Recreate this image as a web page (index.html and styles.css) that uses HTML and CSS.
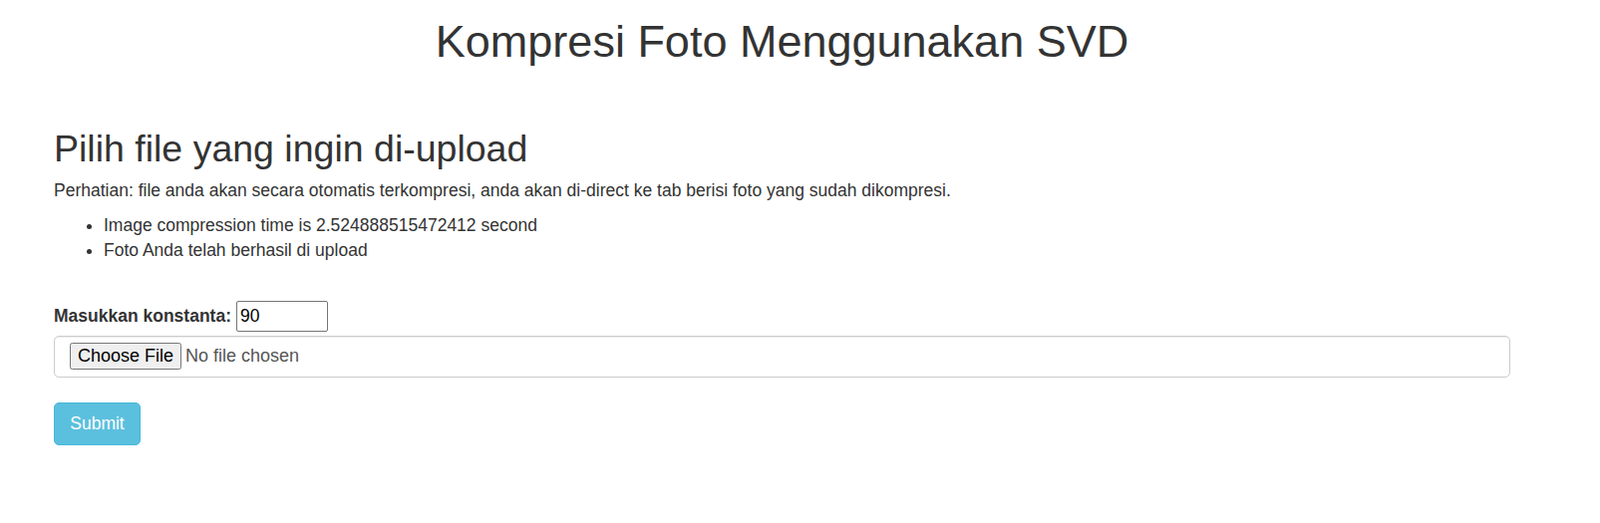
FILE: index.html
```html
<!DOCTYPE html>
<html lang="id">
<head>
<meta charset="utf-8">
<title>Kompresi Foto Menggunakan SVD</title>
<link rel="stylesheet" href="styles.css">
</head>
<body>
<div class="container">
  <h1 class="page-title">Kompresi Foto Menggunakan SVD</h1>
  <h2 class="section-title">Pilih file yang ingin di-upload</h2>
  <p class="note">Perhatian: file anda akan secara otomatis terkompresi, anda akan di-direct ke tab berisi foto yang sudah dikompresi.</p>
  <ul class="messages">
    <li>Image compression time is 2.524888515472412 second</li>
    <li>Foto Anda telah berhasil di upload</li>
  </ul>
  <form class="upload-form">
    <div class="const-row">
      <label class="const-label" for="k">Masukkan konstanta:</label>
      <input class="const-input" id="k" type="text" value="90">
    </div>
    <div class="file-box">
      <input class="file-input" type="file">
    </div>
    <button class="btn-submit" type="button">Submit</button>
  </form>
</div>
</body>
</html>
```

FILE: styles.css
```css
html, body {
  margin: 0;
  padding: 0;
  background: #fff;
}
body {
  font-family: "Liberation Sans", Arial, Helvetica, sans-serif;
  font-size: 17.5px;
  line-height: 25px;
  color: #333;
}
.container {
  margin-left: 54px;
  width: 1461px;
}
.page-title {
  margin: 17px 0 0;
  font-size: 45px;
  font-weight: 500;
  line-height: 49.5px;
  text-align: center;
}
.section-title {
  margin: 62px 0 0;
  font-size: 37.5px;
  font-weight: 500;
  line-height: 41px;
}
.note {
  margin: 9px 0 0;
}
.messages {
  margin: 10px 0 0;
  padding-left: 50px;
}
.upload-form {
  margin-top: 38px;
}
.const-row {
  display: flex;
  align-items: center;
  gap: 5px;
  height: 31px;
}
.const-label {
  font-weight: 700;
}
.const-input {
  box-sizing: border-box;
  width: 92px;
  height: 31px;
  margin: 0;
  padding: 1px 3px;
  border: 1px solid #767676;
  border-radius: 2px;
  font-family: "Liberation Sans", Arial, sans-serif;
  font-size: 17.5px;
  color: #000;
}
.file-box {
  box-sizing: border-box;
  margin-top: 4px;
  height: 42px;
  padding: 0 15px;
  border: 1px solid #ccc;
  border-radius: 5px;
  display: flex;
  align-items: center;
  box-shadow: inset 0 1px 1px rgba(0,0,0,.075);
}
.file-input {
  font-family: "Liberation Sans", Arial, sans-serif;
  font-size: 18px;
  color: #555;
}
.btn-submit {
  display: block;
  box-sizing: border-box;
  margin-top: 25px;
  width: 87px;
  height: 43px;
  padding: 0;
  border: 1px solid #46b8da;
  border-radius: 5px;
  background: #5bc0de;
  color: #fff;
  font-family: "Liberation Sans", Arial, sans-serif;
  font-size: 17.5px;
}
```
